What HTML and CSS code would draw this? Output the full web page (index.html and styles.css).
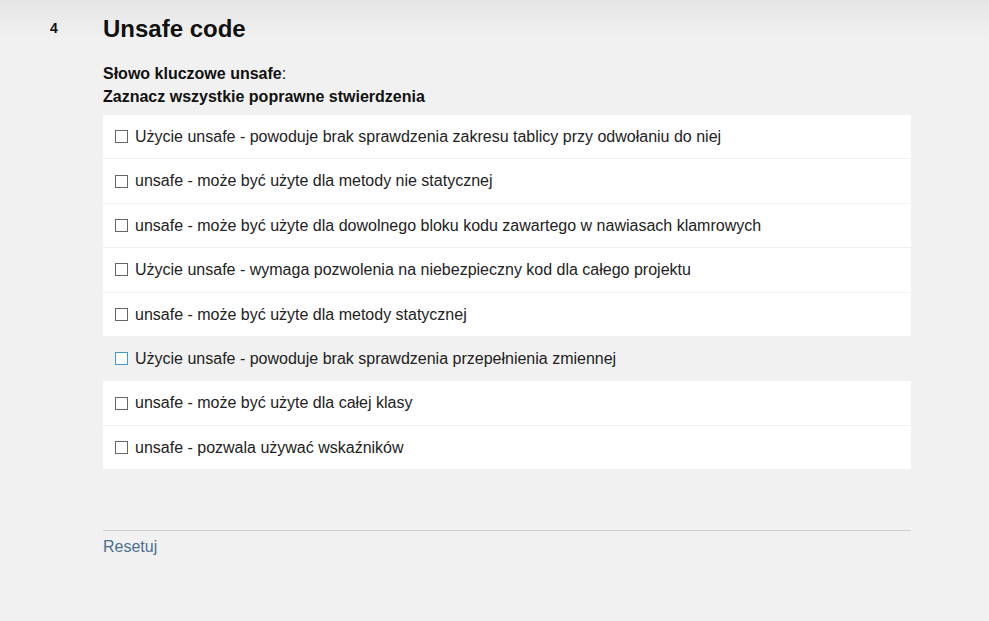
FILE: index.html
```html
<!DOCTYPE html>
<html lang="pl">
<head>
<meta charset="utf-8">
<title>Unsafe code</title>
<link rel="stylesheet" href="styles.css">
</head>
<body>
<div class="page">
  <div class="num">4</div>
  <div class="content">
    <h1 class="title">Unsafe code</h1>
    <div class="question">
      <div><b>Słowo kluczowe unsafe</b>:</div>
      <div><b>Zaznacz wszystkie poprawne stwierdzenia</b></div>
    </div>
    <ul class="options">
      <li class="opt"><span class="box"></span><span>Użycie unsafe - powoduje brak sprawdzenia zakresu tablicy przy odwołaniu do niej</span></li>
      <li class="opt"><span class="box"></span><span>unsafe - może być użyte dla metody nie statycznej</span></li>
      <li class="opt"><span class="box"></span><span>unsafe - może być użyte dla dowolnego bloku kodu zawartego w nawiasach klamrowych</span></li>
      <li class="opt"><span class="box"></span><span>Użycie unsafe - wymaga pozwolenia na niebezpieczny kod dla całego projektu</span></li>
      <li class="opt"><span class="box"></span><span>unsafe - może być użyte dla metody statycznej</span></li>
      <li class="opt hover"><span class="box"></span><span>Użycie unsafe - powoduje brak sprawdzenia przepełnienia zmiennej</span></li>
      <li class="opt"><span class="box"></span><span>unsafe - może być użyte dla całej klasy</span></li>
      <li class="opt"><span class="box"></span><span>unsafe - pozwala używać wskaźników</span></li>
    </ul>
    <div class="footer">
      <a class="reset" href="#">Resetuj</a>
    </div>
  </div>
</div>
</body>
</html>
```

FILE: styles.css
```css
html, body {
  margin: 0;
  padding: 0;
}
body {
  background: #f1f1f1 linear-gradient(to bottom, #e5e5e5 0px, #f1f1f1 40px) no-repeat;
  background-size: 100% 40px;
  font-family: Arial, "Liberation Sans", sans-serif;
  color: #111;
  min-height: 621px;
}
.page {
  display: flex;
  padding-top: 15px;
}
.num {
  width: 103px;
  box-sizing: border-box;
  padding-left: 50px;
  padding-top: 4px;
  font-size: 14px;
  font-weight: bold;
  line-height: 18px;
}
.content {
  width: 808px;
}
.title {
  margin: 0;
  font-size: 24px;
  font-weight: bold;
  line-height: 28px;
  color: #111;
}
.question {
  margin-top: 19px;
  font-size: 16px;
  line-height: 23px;
  color: #111;
}
.options {
  list-style: none;
  margin: 7px 0 0 0;
  padding: 0;
  background: #fff;
}
.opt {
  display: flex;
  align-items: center;
  gap: 7px;
  padding: 12px 12px;
  line-height: 19.4px;
  font-size: 16px;
  color: #222;
  border-bottom: 1px solid #f0f0f0;
}
.opt.hover {
  background: #f1f1f1;
}
.box {
  width: 11px;
  height: 11px;
  border: 1px solid #666;
  background: #fff;
  flex: none;
}
.opt.hover .box {
  border-color: #3c9ad0;
}
.footer {
  margin-top: 60px;
  border-top: 1px solid #cfcfcf;
  padding-top: 6px;
}
.reset {
  font-size: 16px;
  line-height: 20px;
  color: #4a6f8f;
  text-decoration: none;
}
```
